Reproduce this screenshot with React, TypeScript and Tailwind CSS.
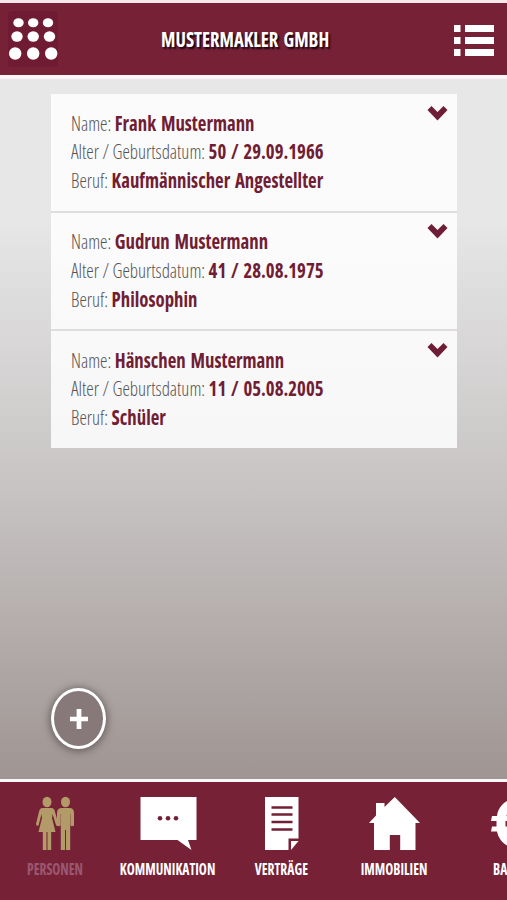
import type { ReactNode } from 'react';

const persons = [
  { name: 'Frank Mustermann', age: '50 / 29.09.1966', job: 'Kaufmännischer Angestellter' },
  { name: 'Gudrun Mustermann', age: '41 / 28.08.1975', job: 'Philosophin' },
  { name: 'Hänschen Mustermann', age: '11 / 05.08.2005', job: 'Schüler' },
];

interface FieldProps {
  label: string;
  value: string;
}

function Field({ label, value }: FieldProps) {
  return (
    <p className="origin-left scale-x-[.895] whitespace-nowrap">
      <span className="font-light text-[#555353]">{label}:</span>{' '}
      <span className="font-bold text-[#711d34] [word-spacing:1.6px]">{value}</span>
    </p>
  );
}

interface TabProps {
  label: string;
  active?: boolean;
  children: ReactNode;
}

function Tab({ label, active, children }: TabProps) {
  return (
    <button className="flex w-[113.3px] shrink-0 flex-col items-center pt-[14px]">
      <svg width="60" height="56" viewBox="0 0 60 56" fill={active ? '#b29b69' : '#fff'}>
        {children}
      </svg>
      <span
        className={`mt-[7px] scale-x-[.875] text-[15.5px] leading-5 font-bold whitespace-nowrap ${active ? 'text-[#9a5870]' : 'text-white'}`}
      >
        {label}
      </span>
    </button>
  );
}

export default function App() {
  return (
    <div className="flex h-[900px] w-[507px] flex-col overflow-hidden bg-[#772137] font-['Open_Sans',sans-serif] [font-stretch:75%]">
      <header className="flex h-[79px] shrink-0 items-center justify-between border-t-[3px] border-b-4 border-t-[#f5e9eb] border-b-[#fbf5f6] bg-[#772137] pr-[13px] pl-[8px]">
        <button className="flex h-[56px] w-[50px] items-center justify-center rounded bg-[#701b34]">
          <svg width="50" height="56" viewBox="0 0 50 56" fill="#fff">
            <ellipse cx="10.5" cy="11.7" rx="5.2" ry="4.5" />
            <ellipse cx="25.2" cy="11.7" rx="5.2" ry="4.5" />
            <ellipse cx="40" cy="11.7" rx="5.2" ry="4.5" />
            <ellipse cx="9" cy="25.5" rx="5.7" ry="5.2" />
            <ellipse cx="25.2" cy="25.5" rx="5.7" ry="5.2" />
            <ellipse cx="41.5" cy="25.5" rx="5.7" ry="5.2" />
            <ellipse cx="7.2" cy="42.5" rx="6.2" ry="6.2" />
            <ellipse cx="25.2" cy="42.5" rx="6.2" ry="6.2" />
            <ellipse cx="43.2" cy="42.5" rx="6.2" ry="6.2" />
          </svg>
        </button>
        <h1 className="mt-[2px] origin-left scale-x-[.888] text-[21px] font-bold text-white [text-shadow:2px_2px_2px_#16060a] [word-spacing:2px]">
          MUSTERMAKLER GMBH
        </h1>
        <button className="mt-[4px]">
          <svg width="40" height="32" viewBox="0 0 40 32" fill="#fff">
            <path d="M0 0h6.500v7H0zM11 0h29v7H11zM0 12h6.500v7H0zM11 12h29v7H11zM0 24h6.500v7H0zM11 24h29v7H11z" />
          </svg>
        </button>
      </header>

      <main className="flex flex-1 flex-col justify-between bg-linear-to-b from-[#e7e7e7] from-20% via-[#c6c2c2] via-60% to-[#9f9593] px-[51px] pt-[15px] pb-[30px]">
        <ul className="w-[406px] divide-y-2 divide-[#dfdddd]">
          {persons.map((person) => (
            <li
              key={person.name}
              className="flex h-[118.5px] items-start justify-between bg-white/85 pt-[14.5px] pr-[9px] pl-[20px] text-[21px] leading-[28.8px] last:h-[117px]"
            >
              <div>
                <Field label="Name" value={person.name} />
                <Field label="Alter / Geburtsdatum" value={person.age} />
                <Field label="Beruf" value={person.job} />
              </div>
              <svg className="mt-[-3px]" width="21" height="15" viewBox="0 0 21 15" fill="#6e1d36">
                <path d="M4.5 0 10.5 6 16.5 0 20.5 4 10.5 14.5.5 4z" />
              </svg>
            </li>
          ))}
        </ul>

        <button className="flex h-[61px] w-[55px] items-center justify-center rounded-[50%] border-3 border-white bg-[#87787a] shadow-[0_1px_7px_2px_rgba(60,50,50,0.5)]">
          <svg width="18" height="20" viewBox="0 0 19 21" fill="#fff">
            <path d="M7 0h5v8h7v5h-7v8H7v-8H0V8h7z" />
          </svg>
        </button>
      </main>

      <footer className="flex h-[121px] shrink-0 border-t-[3px] border-[#fbf7f8]">
        <nav className="ml-[-2px] flex">
          <Tab label="PERSONEN" active>
            {/* woman */}
            <ellipse cx="22" cy="6" rx="4.5" ry="5.2" />
            <path d="M17.500 12h9q2.500 0 3.200 3l4 13.500q0 2-2.500 1L27.500 18l-.5 4 3.500 14H26.200v18h-3.700V36h-1v18h-3.700V36H13.500L17 22l-.5-4-3 11.500q-2.500 1-2.500-1.500l3.200-13q.8-3 3.300-3z" />
            {/* man */}
            <ellipse cx="40.500" cy="6" rx="4.500" ry="5.200" />
            <path d="M37 12h7.500q4.500 0 4.500 5v12.500q-1.800 1.500-3.500 0V18H45.200v36H41V34h-1v20h-4.200V18h-.3v11.500q-2 1.500-3.500 0V17q0-5 5-5z" />
          </Tab>
          <Tab label="KOMMUNIKATION">
            <path d="M2.500 1h56v43h-8.500l3.500 10-14-10h-37z" />
            <g fill="#751f35">
              <circle cx="22" cy="22.200" r="2.300" />
              <circle cx="30" cy="22.200" r="2.300" />
              <circle cx="38" cy="22.200" r="2.300" />
            </g>
          </Tab>
          <Tab label="VERTRÄGE">
            <path d="M14 1h33.500v41.500H37.500V54H14z" />
            <path d="M40 45h7.500l-7.500 9z" />
            <path d="M20.500 11.500h21M20.500 18.500h21M20.500 26h21M20.500 33.500h21" stroke="#751f35" strokeWidth="2.500" />
          </Tab>
          <Tab label="IMMOBILIEN">
            <path d="m29.800 1 9.200 9.500L55 27h-4.500v27H35.200V39H24.800v15H9V27H4l7-7.500V7h8.500v4z" />
          </Tab>
          <Tab label="BANK">
            <path d="M46 1C31 1 20.500 8 19 20h-5l-1 5h5.500v5.500h-4.500l-1 5h6C21 46 31 54 46 54v-8c-9 0-16-3-17-10.500h12v-5H27.500V25H41v-5H28.500C30 13 37 9 46 9z" />
          </Tab>
        </nav>
      </footer>
    </div>
  );
}
